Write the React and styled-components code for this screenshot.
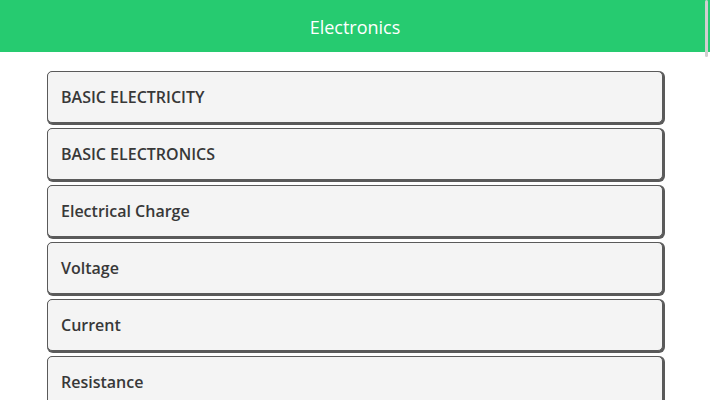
import React from "react";
import styled, { createGlobalStyle } from "styled-components";

const Global = createGlobalStyle`
  html, body { margin: 0; padding: 0; background: #fff; overflow: hidden; }
  body { font-family: "Open Sans", "Noto Sans", sans-serif; }
`;

const Page = styled.div`
  width: 710px;
  height: 400px;
  position: relative;
  overflow: hidden;
`;

const Header = styled.header`
  height: 52px;
  background: #26cb70;
  display: flex;
  align-items: center;
  justify-content: center;
  padding-top: 2px;
  box-sizing: border-box;
  color: #fff;
  font-size: 18px;
  font-weight: 400;
`;

const ScrollThumb = styled.div`
  position: absolute;
  right: 2px;
  top: 0;
  width: 3px;
  height: 57px;
  border-radius: 2px;
  background: #cfcfcf;
`;

const List = styled.div`
  display: flex;
  flex-direction: column;
  gap: 5px;
  padding: 19px 0 0 47px;
  width: 616px;
`;

const Item = styled.div`
  height: 50px;
  box-sizing: content-box;
  border: 1px solid #5a5a5a;
  border-radius: 5px;
  background: #f4f4f4;
  box-shadow: 1px 1px 0 1px #5a5a5a;
  display: flex;
  align-items: center;
  padding-left: 13px;
  color: #383838;
  font-size: 16px;
  font-weight: 600;
`;

const items = [
  "BASIC ELECTRICITY",
  "BASIC ELECTRONICS",
  "Electrical Charge",
  "Voltage",
  "Current",
  "Resistance",
];

export default function App() {
  return (
    <Page>
      <Global />
      <Header>Electronics</Header>
      <ScrollThumb />
      <List>
        {items.map((t) => (
          <Item key={t}>{t}</Item>
        ))}
      </List>
    </Page>
  );
}
